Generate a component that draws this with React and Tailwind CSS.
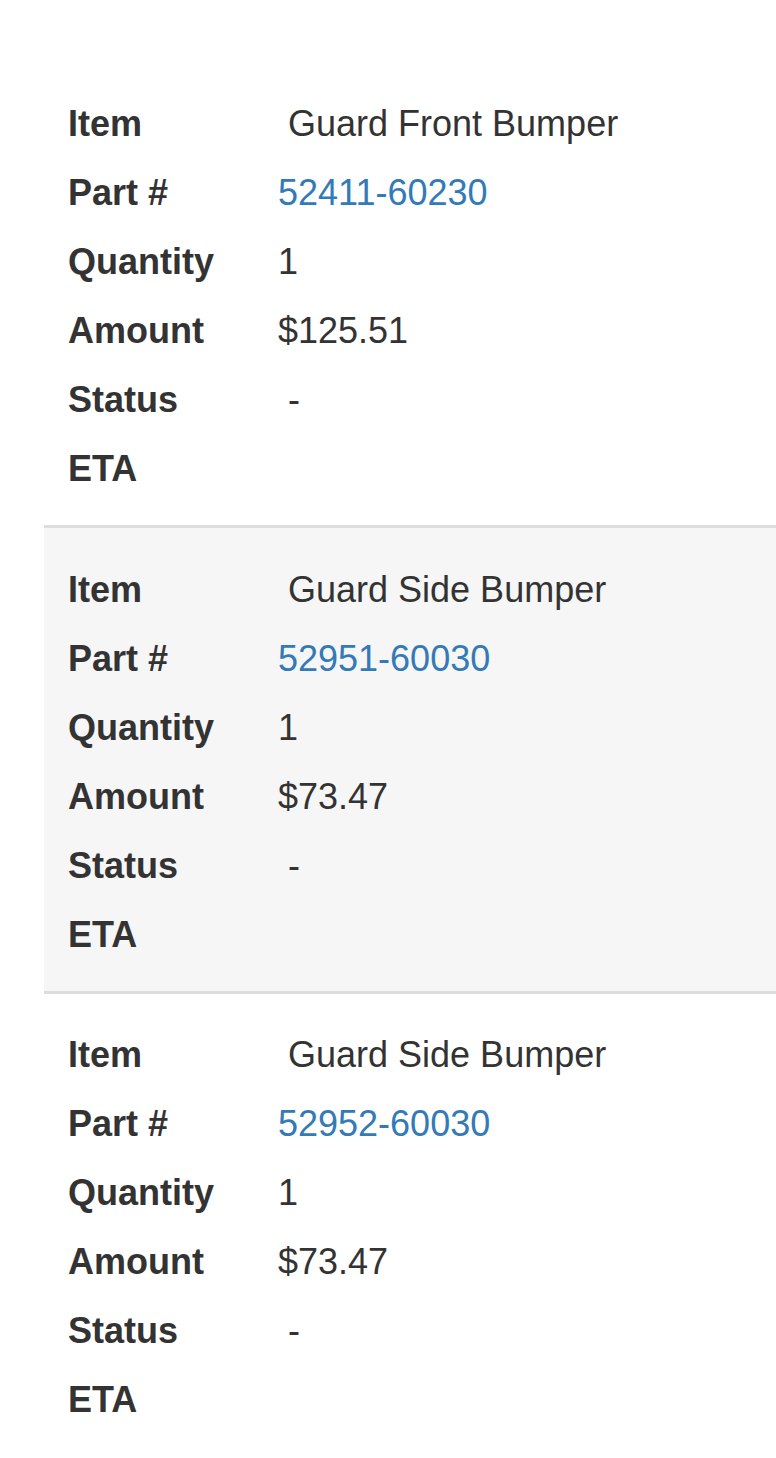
import React from 'react';

const items = [
  { name: 'Guard Front Bumper', part: '52411-60230', qty: '1', amount: '$125.51' },
  { name: 'Guard Side Bumper', part: '52951-60030', qty: '1', amount: '$73.47' },
  { name: 'Guard Side Bumper', part: '52952-60030', qty: '1', amount: '$73.47' },
];

const Row = ({ label, children }) => (
  <div className="flex h-[69px] leading-[69px]">
    <div className="w-[210px] shrink-0 font-bold">{label}</div>
    <div className="whitespace-pre">{children}</div>
  </div>
);

const ItemBlock = ({ item, striped, first }) => (
  <div
    className={`pl-6 pt-[26.5px] pb-[22px] ${first ? '' : 'border-t-[3px] border-[#dddddd]'} ${
      striped ? 'bg-[#f6f6f6]' : 'bg-white'
    }`}
  >
    <Row label="Item">{' ' + item.name}</Row>
    <Row label="Part #">
      <a href="#" className="text-[#337ab7]">{item.part}</a>
    </Row>
    <Row label="Quantity">{item.qty}</Row>
    <Row label="Amount">{item.amount}</Row>
    <Row label="Status">{' -'}</Row>
    <Row label="ETA">{''}</Row>
  </div>
);

const App = () => {
  return (
    <div
      className="min-h-[1458px] bg-white pt-[62.5px] pl-[44px] text-[36px] text-[#333333]"
      style={{ fontFamily: '"Liberation Sans", Arial, sans-serif' }}
    >
      {items.map((item, i) => (
        <ItemBlock key={i} item={item} striped={i % 2 === 1} first={i === 0} />
      ))}
    </div>
  );
};

export default App;
